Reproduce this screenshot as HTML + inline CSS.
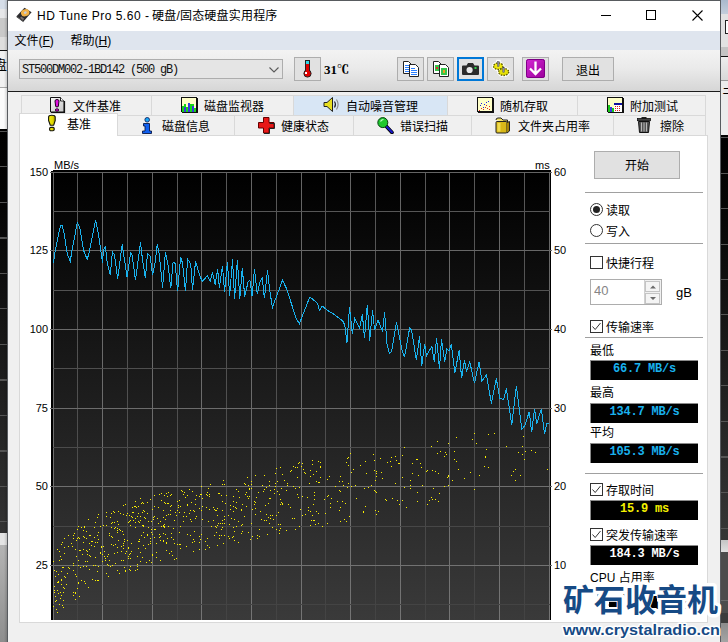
<!DOCTYPE html>
<html lang="zh-CN">
<head>
<meta charset="utf-8">
<title>HD Tune Pro 5.60 - 硬盘/固态硬盘实用程序</title>
<style>
html,body{margin:0;padding:0}
body{width:728px;height:642px;overflow:hidden;position:relative;background:#f0f0f0;
 font-family:"Liberation Sans","Noto Sans CJK SC",sans-serif;font-size:12px;color:#000}
.abs{position:absolute}
.t{position:absolute;white-space:nowrap;line-height:16px;font-size:12px}
.btn{position:absolute;box-sizing:border-box;border:1px solid #adadad;background:#e1e1e1}
.tab{position:absolute;box-sizing:border-box;border:1px solid #d9d9d9;border-bottom:none;background:#f0f0f0;height:21px}

.ax{position:absolute;white-space:nowrap;font:11px/12px "Liberation Sans",sans-serif;color:#000}
.axl{width:30px;text-align:right;left:18px}
.axr{left:554px}
.sep{position:absolute;left:585px;width:118px;height:1px;background:#a0a0a0}
.cb{position:absolute;box-sizing:border-box;width:13px;height:13px;border:1px solid #333;background:#fff;left:590px}
.val{position:absolute;left:590px;width:108px;height:20px;background:#000;text-align:center;
 font:bold 12px/19px "Liberation Mono",monospace;letter-spacing:-0.2px;white-space:nowrap;box-sizing:border-box;border-top:1px solid #8a8a8a;border-left:1px solid #8a8a8a;line-height:16px}
.rd{position:absolute;box-sizing:border-box;width:13px;height:13px;border:1px solid #333;border-radius:50%;background:#fff;left:590px}
</style>
</head>
<body>

<!-- ===== background strips (other windows behind) ===== -->
<div class="abs" style="left:0;top:0;width:8px;height:642px;background:#f0f0f0"></div>
<div class="abs" style="left:0;top:0;width:8px;height:9px;background:#d5dde8"></div>
<div class="abs" style="left:0;top:9px;width:8px;height:9px;background:#e6e7e9"></div>
<div class="abs" style="left:0;top:18px;width:8px;height:19px;background:#c9c9c9"></div>
<div class="abs" style="left:0;top:37px;width:8px;height:13px;background:#dedede"></div>
<div class="abs" style="left:0;top:50px;width:8px;height:1px;background:#111"></div>
<div class="abs" style="left:0;top:51px;width:8px;height:36px;background:#f1f1f1;overflow:hidden"><span class="t" style="left:-6px;top:6px;font-size:13px">盘</span></div>
<div class="abs" style="left:0;top:87px;width:8px;height:1px;background:#a8a8a8"></div>
<div class="abs" style="left:0;top:88px;width:8px;height:41px;background:#fbfbfb"></div>
<div class="abs" style="left:0;top:129px;width:8px;height:404px;background:linear-gradient(#000,#050505 20%,#333)"></div>
<div class="abs" style="left:0;top:131px;width:8px;height:400px;background:repeating-linear-gradient(#555 0,#555 1px,transparent 1px,transparent 35.5px)"></div>
<div class="abs" style="left:0;top:533px;width:8px;height:12px;background:#e4e4e4"></div>
<div class="abs" style="left:0;top:545px;width:8px;height:97px;background:linear-gradient(#b4b4b4,#8e8e8e)"></div>
<div class="abs" style="left:4px;top:0;width:3px;height:642px;background:linear-gradient(90deg,rgba(0,0,0,0),rgba(0,0,0,.16))"></div>

<div class="abs" style="left:721px;top:0;width:7px;height:642px;background:#e2e2e2"></div>
<div class="abs" style="left:721px;top:0;width:7px;height:14px;background:linear-gradient(#a9b9cc,#c3cedb)"></div>
<div class="abs" style="left:721px;top:14px;width:7px;height:33px;background:#e2e2e2"></div>
<div class="abs" style="left:725px;top:20px;width:5px;height:14px;box-sizing:border-box;border:1px solid #222;background:#fff"></div>
<div class="abs" style="left:721px;top:47px;width:7px;height:9px;background:#c4c4c4"></div>
<div class="abs" style="left:721px;top:56px;width:7px;height:1px;background:#111"></div>
<div class="abs" style="left:721px;top:57px;width:7px;height:23px;background:linear-gradient(#eee,#d8d8d8)"></div>
<div class="abs" style="left:721px;top:80px;width:7px;height:1px;background:#999"></div>
<div class="abs" style="left:721px;top:81px;width:7px;height:54px;background:#ececec"></div>
<div class="abs" style="left:722px;top:86px;width:6px;height:10px;overflow:hidden"><span class="t" style="left:0px;top:-4px;font-size:12px">彐</span></div>
<div class="abs" style="left:721px;top:135px;width:7px;height:405px;background:linear-gradient(#000,#060606 20%,#363636)"></div>
<div class="abs" style="left:721px;top:137px;width:7px;height:400px;background:repeating-linear-gradient(#555 0,#555 1px,transparent 1px,transparent 35.5px)"></div>
<div class="abs" style="left:721px;top:540px;width:7px;height:12px;background:linear-gradient(#c4c4c4,#e0e0e0)"></div>
<div class="abs" style="left:721px;top:552px;width:7px;height:71px;background:#4c4c4c"></div>
<div class="abs" style="left:721px;top:600px;width:7px;height:1px;background:#6a6a6a"></div>
<div class="abs" style="left:721px;top:613px;width:7px;height:10px;background:#3c3c3c"></div>
<div class="abs" style="left:721px;top:623px;width:7px;height:19px;background:linear-gradient(#8c8c8c,#a4a4a4)"></div>

<!-- ===== window frame ===== -->
<div class="abs" style="left:7px;top:0;width:714px;height:642px;background:#585b5f"></div>
<div class="abs" style="left:8px;top:1px;width:712px;height:641px;background:#f0f0f0"></div>
<!-- title bar -->
<div class="abs" style="left:8px;top:1px;width:712px;height:30px;background:#fff"></div>
<svg class="abs" style="left:16px;top:7px" width="17" height="16" viewBox="0 0 17 16">
 <polygon points="8.500,0.800 15.600,5.300 7.500,14.600 0.500,9.200" fill="#2b2b2f"/>
 <polygon points="0.500,9.200 7.500,14.600 7.500,15.300 0.500,10" fill="#151515"/>
 <ellipse cx="9.200" cy="5.700" rx="4.300" ry="3.500" fill="#f2b248" transform="rotate(-20 9.200 5.700)"/>
 <ellipse cx="9.300" cy="5.600" rx="1.500" ry="1.300" fill="#c8ccd8" transform="rotate(-20 9.300 5.600)"/>
 <polygon points="5.200,9.600 8.200,11.800 7,13.200 4,11" fill="#7d7370"/>
</svg>
<span class="t" id="title" style="left:37px;top:8px;letter-spacing:0.5px">HD Tune Pro 5.60 -</span><span class="t" id="title2" style="left:152px;top:8px;letter-spacing:0.2px">硬盘/固态硬盘实用程序</span>
<!-- caption buttons -->
<div class="abs" style="left:601px;top:15px;width:10px;height:1px;background:#000"></div>
<div class="abs" style="left:646px;top:10px;width:10px;height:10px;box-sizing:border-box;border:1px solid #000"></div>
<svg class="abs" style="left:692px;top:10px" width="11" height="11" viewBox="0 0 11 11"><path d="M0.5 0.5L10.5 10.5M10.5 0.5L0.5 10.5" stroke="#000" stroke-width="1.1" fill="none"/></svg>

<!-- menu bar -->
<div class="abs" style="left:8px;top:31px;width:712px;height:19px;background:#dfe5ee"></div>
<span class="t" style="left:14.5px;top:33px">文件(<u>F</u>)</span>
<span class="t" style="left:70.500px;top:33px">帮助(<u>H</u>)</span>

<!-- toolbar -->
<div class="abs" style="left:8px;top:50px;width:712px;height:41px;background:linear-gradient(#f3f3f3,#eaeaea 45%,#d6d6d6)"></div>
<div class="abs" style="left:8px;top:91px;width:712px;height:1px;background:#1c1c1c"></div>
<div class="btn" style="left:19px;top:59px;width:264px;height:20px;background:#e5e5e5"></div>
<span class="t" id="drive" style="left:22px;top:62px;color:#111;font:12px/16px 'Liberation Mono',monospace;letter-spacing:-1.2px">ST500DM002-1BD142 (500 gB)</span>
<svg class="abs" style="left:269px;top:67px" width="10" height="6" viewBox="0 0 10 6"><path d="M0.500 0.500L5 5L9.500 0.500" stroke="#5a5a5a" stroke-width="1.100" fill="none"/></svg>

<div class="btn" style="left:294px;top:57px;width:27px;height:24px"></div>
<svg class="abs" style="left:302px;top:60px" width="11" height="18" viewBox="0 0 11 18">
 <rect x="3.5" y="0.5" width="4" height="12" fill="#e00000" stroke="#222" stroke-width="1"/>
 <rect x="4" y="1" width="3" height="3" fill="#30d8e8"/>
 <circle cx="5.5" cy="13.5" r="3.6" fill="#e00000" stroke="#222" stroke-width="1"/>
 <rect x="4" y="9" width="3" height="4" fill="#e00000"/>
 <rect x="3" y="12" width="2" height="2" fill="#fff"/>
</svg>
<span class="t" style="left:324px;top:61px;font:bold 13px/16px 'Liberation Serif','Noto Serif CJK SC',serif">31<span style="font-family:'Noto Serif CJK SC',serif;font-weight:900;font-size:12px">℃</span></span>

<div class="btn" style="left:397px;top:57px;width:27px;height:24px"></div>
<svg class="abs" style="left:403px;top:61px" width="16" height="16" viewBox="0 0 16 16" shape-rendering="crispEdges">
 <path d="M0.500 0.500H5.500L8.500 3.500V12.500H0.500Z" fill="#fff" stroke="#222" shape-rendering="geometricPrecision"/>
 <path d="M2 4.500h4M2 6.500h5M2 8.500h5M2 10.500h5" stroke="#2a7fff" stroke-width="1"/>
 <path d="M6.500 3.500H12.500L15.500 6.500V15.500H6.500Z" fill="#fff" stroke="#222" shape-rendering="geometricPrecision"/>
 <path d="M8 7.500h4M8 9.500h6M8 11.500h6M8 13.500h6" stroke="#2a7fff" stroke-width="1"/>
</svg>
<div class="btn" style="left:427px;top:57px;width:27px;height:24px"></div>
<svg class="abs" style="left:433px;top:61px" width="16" height="16" viewBox="0 0 16 16">
 <path d="M0.5 0.5H5.5L8.5 3.5V12.5H0.5Z" fill="#fff" stroke="#222"/>
 <rect x="2" y="4" width="5" height="6" fill="#35c44a"/><rect x="3" y="6" width="2" height="2" fill="#e83030"/>
 <path d="M6.5 3.5H12.5L15.5 6.5V15.5H6.5Z" fill="#fff" stroke="#222"/>
 <rect x="8" y="7" width="6" height="7" fill="#35c44a"/><rect x="10" y="9" width="2" height="3" fill="#e8a020"/>
</svg>
<div class="btn" style="left:457px;top:57px;width:27px;height:24px;border:2px solid #0078d7"></div>
<svg class="abs" style="left:462px;top:62px" width="17" height="14" viewBox="0 0 17 14">
 <path d="M1 3.5h3.5L6 1h5l1.5 2.5H16a1 1 0 0 1 1 1V12a1 1 0 0 1-1 1H1a1 1 0 0 1-1-1V4.500a1 1 0 0 1 1-1z" fill="#2b2b2b"/>
 <circle cx="7.6" cy="8" r="3.1" fill="#e8e8e8"/>
 <rect x="12.5" y="5" width="2" height="2" fill="#2fd24a"/>
</svg>
<div class="btn" style="left:487px;top:57px;width:27px;height:24px"></div>
<svg class="abs" style="left:491px;top:59px" width="20" height="20" viewBox="0 0 20 20">
 <g stroke="#fff" stroke-width="2.400" fill="#fff"><ellipse cx="7.200" cy="7.200" rx="5" ry="3.600"/><ellipse cx="12.700" cy="13" rx="5.400" ry="3.800"/><rect x="6.400" y="2" width="2" height="5"/></g>
 <ellipse cx="7.200" cy="7.200" rx="4.700" ry="3.300" fill="#e6e000" stroke="#5c5a00" stroke-width="1.300" stroke-dasharray="1.500 1.200"/>
 <ellipse cx="7.200" cy="7" rx="3.300" ry="2.200" fill="#f0ea10"/>
 <ellipse cx="12.700" cy="13" rx="5.100" ry="3.500" fill="#dcd600" stroke="#5c5a00" stroke-width="1.300" stroke-dasharray="1.500 1.200"/>
 <ellipse cx="12.700" cy="12.800" rx="3.600" ry="2.300" fill="#e8e208"/>
 <rect x="6.500" y="2.500" width="1.600" height="5" fill="#8a8aa8" stroke="#444" stroke-width=".4"/>
 <rect x="11.800" y="8.300" width="1.600" height="5" fill="#8a8aa8" stroke="#444" stroke-width=".4"/>
</svg>
<div class="btn" style="left:522px;top:57px;width:27px;height:24px"></div>
<svg class="abs" style="left:526px;top:59px" width="19" height="19" viewBox="0 0 19 19">
 <defs><linearGradient id="pg" x1="0" y1="0" x2="1" y2="1"><stop offset="0" stop-color="#d428d4"/><stop offset="1" stop-color="#9a009a"/></linearGradient></defs>
 <rect x="0" y="0" width="19" height="19" rx="2.500" fill="url(#pg)"/>
 <rect x="0.500" y="0.500" width="18" height="18" rx="2" fill="none" stroke="#7c0084"/>
 <path d="M9.500 2.500V14.500M4 9.500L9.500 15L15 9.500" stroke="#fff" stroke-width="2.300" fill="none"/>
</svg>
<div class="btn" style="left:562px;top:57px;width:52px;height:24px"></div>
<span class="t" style="left:576px;top:63px">退出</span>

<!-- ===== tabs ===== -->
<div class="tab" style="left:21px;top:95px;width:131px"></div>
<div class="tab" style="left:151px;top:95px;width:143px"></div>
<div class="tab" style="left:293px;top:95px;width:155px;background:#d8e6f5"></div>
<div class="tab" style="left:447px;top:95px;width:131px"></div>
<div class="tab" style="left:577px;top:95px;width:129px"></div>

<div class="tab" style="left:117px;top:115px;width:118px"></div>
<div class="tab" style="left:234px;top:115px;width:120px"></div>
<div class="tab" style="left:353px;top:115px;width:119px"></div>
<div class="tab" style="left:471px;top:115px;width:143px"></div>
<div class="tab" style="left:613px;top:115px;width:93px"></div>

<!-- tab pane -->
<div class="abs" style="left:19px;top:135px;width:689px;height:488px;box-sizing:border-box;border:1px solid #d9d9d9;background:#fff"></div>
<!-- selected tab -->
<div class="tab" style="left:19px;top:113px;width:99px;height:23px;background:#fff"></div>

<!-- tab icons + labels : top row -->
<svg class="abs" style="left:50px;top:97px" width="16" height="16" viewBox="0 0 16 16">
 <defs><linearGradient id="dg" x1="0" y1="0" x2="1" y2="1"><stop offset="0" stop-color="#fafafa"/><stop offset="1" stop-color="#c4c4c4"/></linearGradient></defs>
 <path d="M0.500 0.500H10.500L14 4V15H0.500Z" fill="url(#dg)" stroke="#111" stroke-width="1"/>
 <path d="M14.500 4V15.500H1" fill="none" stroke="#111" stroke-width="1.200"/>
 <path d="M10.500 0.500V4H14" fill="#fff" stroke="#111" stroke-width=".9"/>
 <path d="M5 4Q5 2.500 7 2.500Q9 2.500 9 4L8.300 9.500Q7 10.500 5.700 9.500Z" fill="#e010e0" stroke="#200020" stroke-width="1"/>
 <ellipse cx="7" cy="13" rx="1.700" ry="1.200" fill="#e010e0" stroke="#200020" stroke-width=".9"/>
</svg>
<span class="t" style="left:73px;top:99px">文件基准</span>
<svg class="abs" style="left:181px;top:97px" width="17" height="16" viewBox="0 0 17 16" shape-rendering="crispEdges">
 <rect x="0.500" y="0.500" width="15" height="14" fill="#ffffc8" stroke="#111"/>
 <rect x="1" y="15" width="16" height="1" fill="#111"/><rect x="16" y="1" width="1" height="15" fill="#111"/>
 <rect x="1" y="7" width="14" height="8" fill="#18d818"/>
 <rect x="3" y="10" width="2" height="5" fill="#3838e0"/><rect x="7" y="6" width="2" height="9" fill="#3838e0"/><rect x="11" y="9" width="2" height="6" fill="#3838e0"/>
 <rect x="1" y="7" width="2" height="2" fill="#ffffc8"/><rect x="5" y="7" width="2" height="3" fill="#ffffc8"/><rect x="13" y="7" width="2" height="4" fill="#ffffc8"/>
</svg>
<span class="t" style="left:204px;top:99px">磁盘监视器</span>
<svg class="abs" style="left:323px;top:96px" width="17" height="17" viewBox="0 0 17 17">
 <path d="M1 6.500h3L9.500 1.500V15.500L4 10.500H1Z" fill="#e8e020" stroke="#222" stroke-width="1"/>
 <path d="M11.5 5.500q2 3 0 6" fill="none" stroke="#222" stroke-width="1.100"/>
 <path d="M13.500 3.500q3.200 5 0 10" fill="none" stroke="#888" stroke-width="1.100"/>
</svg>
<span class="t" style="left:346px;top:99px">自动噪音管理</span>
<svg class="abs" style="left:477px;top:97px" width="17" height="16" viewBox="0 0 17 16" shape-rendering="crispEdges">
 <rect x="0.500" y="0.500" width="15" height="14" fill="#ffffc8" stroke="#111"/>
 <rect x="1" y="15" width="16" height="1" fill="#111"/><rect x="16" y="1" width="1" height="15" fill="#111"/>
 <path d="M3 8h1M7 7h1M9 5h1M11 4h1M6 10h1M4 6h1" stroke="#2020e8" transform="translate(0,.5)"/>
 <path d="M2 13h1M4 11h1M6 12h1M8 10h1M10 11h1M12 9h1M12 12h1M9 8h1" stroke="#e82020" transform="translate(0,.5)"/>
</svg>
<span class="t" style="left:500px;top:99px">随机存取</span>
<svg class="abs" style="left:607px;top:97px" width="17" height="16" viewBox="0 0 17 16" shape-rendering="crispEdges">
 <rect x="0.500" y="0.500" width="15" height="14" fill="#ffffc8" stroke="#111"/>
 <rect x="1" y="15" width="16" height="1" fill="#111"/><rect x="16" y="1" width="1" height="15" fill="#111"/>
 <rect x="1" y="8" width="2" height="7" fill="#18c818"/><rect x="3" y="10" width="2" height="5" fill="#3838e0"/><rect x="5" y="11" width="2" height="4" fill="#18c818"/>
 <rect x="7" y="6" width="8" height="9" fill="#fff"/><rect x="7" y="6" width="8" height="2" fill="#1010a0"/>
 <path d="M8 9h1M10 9h1M12 9h1M8 11h1M10 11h1M12 11h1M8 13h1M10 13h1M12 13h1" stroke="#e02020" transform="translate(0,.5)"/>
</svg>
<span class="t" style="left:630px;top:99px">附加测试</span>

<!-- bottom row -->
<svg class="abs" style="left:47px;top:114px" width="10" height="18" viewBox="0 0 10 18">
 <defs><linearGradient id="yg" x1="0" y1="0" x2="1" y2="0"><stop offset="0" stop-color="#f4ec10"/><stop offset=".6" stop-color="#e0d800"/><stop offset="1" stop-color="#a8a000"/></linearGradient></defs>
 <path d="M1.600 3Q1.600 1.300 4.800 1.300Q8.200 1.300 8.200 3V6.500L6.700 11.200H3.300L1.600 6.500Z" fill="url(#yg)" stroke="#15150a" stroke-width="1.100" stroke-linejoin="round"/>
 <rect x="2.600" y="13.400" width="4.600" height="3.300" rx="1.200" fill="url(#yg)" stroke="#15150a" stroke-width="1.100"/>
</svg>
<span class="t" style="left:67px;top:117px">基准</span>
<svg class="abs" style="left:141px;top:117px" width="12" height="17" viewBox="0 0 12 17">
 <circle cx="6.200" cy="2.800" r="2.300" fill="#18a8f8" stroke="#102060" stroke-width=".9"/>
 <path d="M2.500 6.500H8.500V14H10.500V16.500H1.500V14H4V9H2.500Z" fill="#1060f0" stroke="#081848" stroke-width=".9"/>
</svg>
<span class="t" style="left:162px;top:119px">磁盘信息</span>
<svg class="abs" style="left:258px;top:117px" width="17" height="17" viewBox="0 0 17 17">
 <path d="M5.500 0.500H11V5.500H16V11H11V16H5.500V11H0.500V5.500H5.500Z" fill="#e81818" stroke="#600" stroke-width="1"/>
 <path d="M11.500 6.500H16.500V11.500H11.500V16.500H6" fill="none" stroke="#222" stroke-width="1"/>
</svg>
<span class="t" style="left:281px;top:119px">健康状态</span>
<svg class="abs" style="left:377px;top:117px" width="17" height="17" viewBox="0 0 17 17">
 <path d="M9 9L15 15.500" stroke="#000" stroke-width="3.600" stroke-linecap="round"/>
 <path d="M9 9L15 15.300" stroke="#1818c8" stroke-width="2" stroke-linecap="round"/>
 <circle cx="5.800" cy="5.600" r="5" fill="#20c830" stroke="#064010" stroke-width="1"/>
 <path d="M3.500 4.500Q4.500 2.500 6.500 2.500" stroke="#c8ffc8" stroke-width="1.200" fill="none"/>
</svg>
<span class="t" style="left:400px;top:119px">错误扫描</span>
<svg class="abs" style="left:495px;top:117px" width="16" height="17" viewBox="0 0 16 17">
 <path d="M1 3Q1 1 3 1H6L8 3H12.500V5" fill="#f0e060" stroke="#222" stroke-width="1"/>
 <rect x="1" y="4.500" width="11" height="11.500" rx="1" fill="#d8b818" stroke="#222" stroke-width="1"/>
 <path d="M12 5.500L14.500 4.500V14L12 16" fill="#a88808" stroke="#222" stroke-width="1"/>
 <rect x="2.500" y="6" width="3" height="8.500" fill="#f0dc50"/>
</svg>
<span class="t" style="left:518px;top:119px">文件夹占用率</span>
<svg class="abs" style="left:637px;top:117px" width="14" height="16" viewBox="0 0 14 16">
 <rect x="4.500" y="0" width="5" height="2" fill="#222"/>
 <rect x="0.500" y="1.500" width="13" height="2.200" fill="#444" stroke="#111" stroke-width=".8"/>
 <path d="M1.500 4.500H12.500L11.500 15.500H2.500Z" fill="#555" stroke="#111" stroke-width="1"/>
 <path d="M4.500 5.500V14.500M7 5.500V14.500M9.500 5.500V14.500" stroke="#b8b8b8" stroke-width="1"/>
</svg>
<span class="t" style="left:660px;top:119px">擦除</span>

<!-- ===== chart ===== -->
<svg class="abs" style="left:0;top:0" width="728" height="642" viewBox="0 0 728 642" shape-rendering="crispEdges">
<defs><linearGradient id="bg" x1="0" y1="0" x2="0" y2="1"><stop offset="0" stop-color="#000"/><stop offset="1" stop-color="#3a3a3a"/></linearGradient><linearGradient id="mj" gradientUnits="userSpaceOnUse" x1="0" y1="172" x2="0" y2="620"><stop offset="0" stop-color="#646464"/><stop offset="1" stop-color="#747474"/></linearGradient><linearGradient id="mn" gradientUnits="userSpaceOnUse" x1="0" y1="172" x2="0" y2="620"><stop offset="0" stop-color="#585858"/><stop offset="0.5" stop-color="#505050"/><stop offset="1" stop-color="#434343"/></linearGradient></defs>
<rect x="51" y="171" width="500" height="449" fill="#000"/>
<rect x="53" y="170" width="498" height="1" fill="#000"/>
<rect x="53" y="172" width="497" height="448" fill="url(#bg)"/>
<rect x="53" y="172" width="1" height="448" fill="url(#mj)"/>
<rect x="77" y="172" width="1" height="448" fill="url(#mn)"/>
<rect x="102" y="172" width="1" height="448" fill="url(#mj)"/>
<rect x="127" y="172" width="1" height="448" fill="url(#mn)"/>
<rect x="152" y="172" width="1" height="448" fill="url(#mj)"/>
<rect x="177" y="172" width="1" height="448" fill="url(#mn)"/>
<rect x="201" y="172" width="1" height="448" fill="url(#mj)"/>
<rect x="226" y="172" width="1" height="448" fill="url(#mn)"/>
<rect x="251" y="172" width="1" height="448" fill="url(#mj)"/>
<rect x="276" y="172" width="1" height="448" fill="url(#mn)"/>
<rect x="301" y="172" width="1" height="448" fill="url(#mj)"/>
<rect x="325" y="172" width="1" height="448" fill="url(#mn)"/>
<rect x="350" y="172" width="1" height="448" fill="url(#mj)"/>
<rect x="375" y="172" width="1" height="448" fill="url(#mn)"/>
<rect x="400" y="172" width="1" height="448" fill="url(#mj)"/>
<rect x="425" y="172" width="1" height="448" fill="url(#mn)"/>
<rect x="449" y="172" width="1" height="448" fill="url(#mj)"/>
<rect x="474" y="172" width="1" height="448" fill="url(#mn)"/>
<rect x="499" y="172" width="1" height="448" fill="url(#mj)"/>
<rect x="524" y="172" width="1" height="448" fill="url(#mn)"/>
<rect x="549" y="172" width="1" height="448" fill="url(#mj)"/>
<rect x="53" y="172" width="497" height="1" fill="#646464"/>
<rect x="50" y="172" width="3" height="1" fill="#6e6e6e"/>
<rect x="550" y="172" width="2" height="1" fill="#6e6e6e"/>
<rect x="53" y="211" width="497" height="1" fill="#565656"/>
<rect x="53" y="250" width="497" height="1" fill="#676767"/>
<rect x="50" y="250" width="3" height="1" fill="#6e6e6e"/>
<rect x="550" y="250" width="2" height="1" fill="#6e6e6e"/>
<rect x="53" y="290" width="497" height="1" fill="#525252"/>
<rect x="53" y="329" width="497" height="1" fill="#6a6a6a"/>
<rect x="50" y="329" width="3" height="1" fill="#6e6e6e"/>
<rect x="550" y="329" width="2" height="1" fill="#6e6e6e"/>
<rect x="53" y="368" width="497" height="1" fill="#4f4f4f"/>
<rect x="53" y="408" width="497" height="1" fill="#6c6c6c"/>
<rect x="50" y="408" width="3" height="1" fill="#6e6e6e"/>
<rect x="550" y="408" width="2" height="1" fill="#6e6e6e"/>
<rect x="53" y="447" width="497" height="1" fill="#4b4b4b"/>
<rect x="53" y="486" width="497" height="1" fill="#6f6f6f"/>
<rect x="50" y="486" width="3" height="1" fill="#6e6e6e"/>
<rect x="550" y="486" width="2" height="1" fill="#6e6e6e"/>
<rect x="53" y="526" width="497" height="1" fill="#474747"/>
<rect x="53" y="565" width="497" height="1" fill="#727272"/>
<rect x="50" y="565" width="3" height="1" fill="#6e6e6e"/>
<rect x="550" y="565" width="2" height="1" fill="#6e6e6e"/>
<rect x="53" y="604" width="497" height="1" fill="#444444"/>
<path d="M75 593h1M78 537h1M84 527h1M57 590h1M100 553h1M53 561h1M58 574h1M78 560h1M75 599h1M94 537h1M62 567h1M72 546h1M98 580h1M56 600h1M57 612h1M58 581h1M61 571h1M89 543h1M63 607h1M68 546h1M95 522h1M63 592h1M54 592h1M82 554h1M77 588h1M60 598h1M62 605h1M100 553h1M64 553h1M65 577h1M61 544h1M80 567h1M98 514h1M55 576h1M59 604h1M85 561h1M63 587h1M54 586h1M68 535h1M89 569h1M92 541h1M97 542h1M95 557h1M81 527h1M102 561h1M89 549h1M57 549h1M76 576h1M83 542h1M86 531h1M85 583h1M86 550h1M98 539h1M68 567h1M95 580h1M61 559h1M73 563h1M94 527h1M61 580h1M54 590h1M64 538h1M75 574h1M100 526h1M58 593h1M66 584h1M83 549h1M64 588h1M75 592h1M81 580h1M76 540h1M93 565h1M97 580h1M92 579h1M58 582h1M62 542h1M61 595h1M60 592h1M87 554h1M57 582h1M89 555h1M80 550h1M97 571h1M79 538h1M78 526h1M78 582h1M77 529h1M73 595h1M76 556h1M97 535h1M83 530h1M54 570h1M69 568h1M59 560h1M79 550h1M79 538h1M84 581h1M95 565h1M97 535h1M63 600h1M64 576h1M73 535h1M55 596h1M101 546h1M77 538h1M54 586h1M60 556h1M102 554h1M75 549h1M78 560h1M94 546h1M73 538h1M53 606h1M95 542h1M78 583h1M98 566h1M73 592h1M91 545h1M56 571h1M84 537h1M86 566h1M79 596h1M87 551h1M89 535h1M56 609h1M78 565h1M84 526h1M64 547h1M61 584h1M73 570h1M67 573h1M88 519h1M55 601h1M97 517h1M63 567h1M101 547h1M88 587h1M83 566h1M59 551h1M86 538h1M73 565h1M100 552h1M91 541h1M87 561h1M90 535h1M98 532h1M74 533h1M61 579h1M71 543h1M90 556h1M83 536h1M115 563h1M135 570h1M129 554h1M123 545h1M106 516h1M126 551h1M141 503h1M135 506h1M138 548h1M109 533h1M120 513h1M130 566h1M148 527h1M117 528h1M149 560h1M120 530h1M122 531h1M130 558h1M144 537h1M140 561h1M103 546h1M130 570h1M142 502h1M141 535h1M147 502h1M109 560h1M114 522h1M128 556h1M119 573h1M127 540h1M137 564h1M143 545h1M142 557h1M150 541h1M137 556h1M123 514h1M151 521h1M112 537h1M150 499h1M108 554h1M111 513h1M131 516h1M111 523h1M138 541h1M111 527h1M140 520h1M143 532h1M146 562h1M129 569h1M113 511h1M142 525h1M128 522h1M135 527h1M121 560h1M132 512h1M118 524h1M128 547h1M115 544h1M140 498h1M144 517h1M138 506h1M125 570h1M145 518h1M123 543h1M113 545h1M110 566h1M118 511h1M125 553h1M136 507h1M125 571h1M135 501h1M137 516h1M125 504h1M142 512h1M117 532h1M117 530h1M135 518h1M139 522h1M130 553h1M143 503h1M107 556h1M111 536h1M132 507h1M110 517h1M106 573h1M128 548h1M143 525h1M123 505h1M137 569h1M135 522h1M119 529h1M128 558h1M133 512h1M147 535h1M127 513h1M151 532h1M144 511h1M133 520h1M131 551h1M148 521h1M108 576h1M147 535h1M130 520h1M152 554h1M108 565h1M147 513h1M143 510h1M106 512h1M151 562h1M117 552h1M121 546h1M103 525h1M109 535h1M111 544h1M130 525h1M104 556h1M150 538h1M123 548h1M140 552h1M152 555h1M123 534h1M147 534h1M124 567h1M105 560h1M139 541h1M117 521h1M124 539h1M105 558h1M114 528h1M114 512h1M150 543h1M123 560h1M139 539h1M107 564h1M129 521h1M117 547h1M143 526h1M131 543h1M118 540h1M151 529h1M117 570h1M112 565h1M126 515h1M152 509h1M112 522h1M138 521h1M145 548h1M137 566h1M106 525h1M138 513h1M114 553h1M121 551h1M132 517h1M148 544h1M134 506h1M124 541h1M104 551h1M115 527h1M140 516h1M129 515h1M201 486h1M189 513h1M177 501h1M184 512h1M191 521h1M194 531h1M199 496h1M160 536h1M174 543h1M191 502h1M163 533h1M154 537h1M180 548h1M159 494h1M174 520h1M192 491h1M180 526h1M164 502h1M154 516h1M178 507h1M156 552h1M165 503h1M193 510h1M170 506h1M154 529h1M201 494h1M189 489h1M196 495h1M167 503h1M201 534h1M163 510h1M164 524h1M170 514h1M182 491h1M184 492h1M186 546h1M196 516h1M194 511h1M163 517h1M179 500h1M163 525h1M174 559h1M195 499h1M156 543h1M166 493h1M165 519h1M187 505h1M160 560h1M190 535h1M153 517h1M156 557h1M190 510h1M164 495h1M181 490h1M173 528h1M187 505h1M185 497h1M166 542h1M171 551h1M166 515h1M154 495h1M180 544h1M167 538h1M163 541h1M199 542h1M183 494h1M171 494h1M168 526h1M160 521h1M160 540h1M157 518h1M159 534h1M179 512h1M170 495h1M155 529h1M175 512h1M153 519h1M180 506h1M161 526h1M199 508h1M199 536h1M183 516h1M166 550h1M171 505h1M177 510h1M200 494h1M163 540h1M152 534h1M164 527h1M179 532h1M193 551h1M169 553h1M187 534h1M200 539h1M183 521h1M170 510h1M178 505h1M168 503h1M158 507h1M187 495h1M190 519h1M195 504h1M177 544h1M187 504h1M168 514h1M194 541h1M173 539h1M193 539h1M171 537h1M161 493h1M199 549h1M186 516h1M172 555h1M154 506h1M166 543h1M158 523h1M176 515h1M192 542h1M171 533h1M201 510h1M179 544h1M161 500h1M164 526h1M168 492h1M159 537h1M163 526h1M165 534h1M167 496h1M176 558h1M195 518h1M242 504h1M234 519h1M248 532h1M224 535h1M210 484h1M208 488h1M239 497h1M202 498h1M202 519h1M241 525h1M242 531h1M251 481h1M222 527h1M247 477h1M213 507h1M234 531h1M233 501h1M247 496h1M238 491h1M229 524h1M207 492h1M223 480h1M222 501h1M249 488h1M218 523h1M223 543h1M222 527h1M215 526h1M218 493h1M251 484h1M220 523h1M232 537h1M233 511h1M207 538h1M224 523h1M221 495h1M230 509h1M224 519h1M248 485h1M251 523h1M238 542h1M245 484h1M226 495h1M234 540h1M241 510h1M205 541h1M214 535h1M228 536h1M215 510h1M241 509h1M241 533h1M229 538h1M209 494h1M219 538h1M207 495h1M244 516h1M205 549h1M233 536h1M211 526h1M202 506h1M233 496h1M236 489h1M236 508h1M207 545h1M219 493h1M236 526h1M217 508h1M233 506h1M222 510h1M248 498h1M213 520h1M245 494h1M235 507h1M221 529h1M224 484h1M216 510h1M216 527h1M214 509h1M246 492h1M219 535h1M231 518h1M206 507h1M238 521h1M246 506h1M225 503h1M217 525h1M250 539h1M221 535h1M236 502h1M222 523h1M251 488h1M209 509h1M206 494h1M233 527h1M242 524h1M208 521h1M249 496h1M228 515h1M217 515h1M230 505h1M216 532h1M222 484h1M224 516h1M244 483h1M209 547h1M222 520h1M249 489h1M242 524h1M209 496h1M217 545h1M293 466h1M255 514h1M268 503h1M295 529h1M276 529h1M266 520h1M270 498h1M269 498h1M254 501h1M279 494h1M256 497h1M275 483h1M276 468h1M299 462h1M299 487h1M270 490h1M281 488h1M277 481h1M264 489h1M272 527h1M266 514h1M293 486h1M292 518h1M254 504h1M279 530h1M252 536h1M280 467h1M272 515h1M297 467h1M273 519h1M274 489h1M288 504h1M284 480h1M267 534h1M297 477h1M278 524h1M295 488h1M270 515h1M276 515h1M290 471h1M260 511h1M269 481h1M281 502h1M280 524h1M280 499h1M268 517h1M264 520h1M264 475h1M270 518h1M282 504h1M297 494h1M263 491h1M293 466h1M280 504h1M259 536h1M291 470h1M262 485h1M282 474h1M280 528h1M286 490h1M287 485h1M287 483h1M252 509h1M266 487h1M275 486h1M265 505h1M259 529h1M282 503h1M278 512h1M290 507h1M269 523h1M274 493h1M298 497h1M269 485h1M257 535h1M255 502h1M257 538h1M295 467h1M255 475h1M300 509h1M294 518h1M255 508h1M277 491h1M261 519h1M275 473h1M279 533h1M258 492h1M286 530h1M299 526h1M298 463h1M330 503h1M331 498h1M347 458h1M327 523h1M303 469h1M344 519h1M302 463h1M342 501h1M327 496h1M339 510h1M301 466h1M340 521h1M342 481h1M318 482h1M302 515h1M314 499h1M327 479h1M335 486h1M313 520h1M310 470h1M314 492h1M340 476h1M313 504h1M314 495h1M314 520h1M310 476h1M316 481h1M337 501h1M340 491h1M305 514h1M313 474h1M322 526h1M319 482h1M346 521h1M320 467h1M340 507h1M318 513h1M320 477h1M330 507h1M325 513h1M302 496h1M320 462h1M346 462h1M311 520h1M349 516h1M318 523h1M308 510h1M348 465h1M308 507h1M345 503h1M348 483h1M320 466h1M315 524h1M305 473h1M318 461h1M316 471h1M307 497h1M328 495h1M339 490h1M348 457h1M312 464h1M316 511h1M347 487h1M309 483h1M329 476h1M340 521h1M324 499h1M343 485h1M310 525h1M350 453h1M339 481h1M304 472h1M310 511h1M312 460h1M312 515h1M376 492h1M374 460h1M351 472h1M353 469h1M381 472h1M374 490h1M366 473h1M395 483h1M371 485h1M374 470h1M396 460h1M397 500h1M395 456h1M376 514h1M365 461h1M387 462h1M380 458h1M398 463h1M356 498h1M368 487h1M375 510h1M376 473h1M351 486h1M364 488h1M382 478h1M355 485h1M375 491h1M399 463h1M373 454h1M390 461h1M392 498h1M363 511h1M376 476h1M378 511h1M375 480h1M365 506h1M376 471h1M360 465h1M392 498h1M399 504h1M385 499h1M386 500h1M391 457h1M391 466h1M363 512h1M402 477h1M417 492h1M431 497h1M447 477h1M404 487h1M406 507h1M444 456h1M410 488h1M438 501h1M431 446h1M437 441h1M444 486h1M439 493h1M429 500h1M432 470h1M420 463h1M402 455h1M440 451h1M433 488h1M435 471h1M416 459h1M410 485h1M435 499h1M417 501h1M446 454h1M448 475h1M448 485h1M417 459h1M426 471h1M402 500h1M427 470h1M437 453h1M410 480h1M412 463h1M404 447h1M418 475h1M448 476h1M421 467h1M412 473h1M448 443h1M422 485h1M438 473h1M432 499h1M445 452h1M427 504h1M476 443h1M488 434h1M458 469h1M464 478h1M486 449h1M488 467h1M485 457h1M472 439h1M474 489h1M494 433h1M454 451h1M485 456h1M456 461h1M479 475h1M470 472h1M484 466h1M452 480h1M456 437h1M474 433h1M454 459h1M523 436h1M547 469h1M524 459h1M515 480h1M506 446h1M511 475h1M525 451h1M520 475h1M513 471h1M535 452h1M518 452h1M522 446h1M531 450h1M515 469h1M522 454h1" stroke="#fbf000" stroke-width="1" fill="none" transform="translate(0,0.5)"/>
<polyline points="53.5,263.3 55.3,250.0 60.5,225.4 62.3,225.7 64.0,233.0 67.5,254.9 70.3,261.2 71.7,252.0 77.3,222.6 79.7,227.5 83.7,250.7 87.2,259.4 89.3,252.0 95.6,220.5 98.4,233.8 102.6,263.3 103.3,250.7 105.4,245.8 106.8,260.5 110.3,275.2 112.4,252.0 114.5,254.9 117.7,278.7 122.2,244.4 127.1,277.3 130.6,252.8 132.0,254.9 135.5,280.1 140.5,242.5 142.6,260.5 145.4,278.0 147.5,253.5 150.0,255.6 152.5,274.9 154.9,263.7 157.3,244.0 159.1,253.1 162.6,287.5 165.4,252.4 168.0,265.0 170.8,288.2 173.1,262.0 175.2,263.7 177.6,291.4 180.6,257.3 182.5,263.0 185.5,291.4 187.6,259.2 190.7,263.7 192.5,289.6 195.6,261.1 198.4,271.4 202.2,281.6 207.5,275.6 210.3,281.2 212.4,272.1 215.2,284.7 217.6,269.3 219.4,287.5 222.5,266.2 224.6,291.7 227.4,262.0 229.7,295.6 232.5,259.2 234.6,298.7 237.4,260.2 239.8,298.7 242.3,267.9 244.7,296.6 248.2,281.2 250.0,280.5 252.1,296.3 254.5,268.9 257.3,294.2 259.8,282.3 262.3,278.0 264.4,298.4 267.5,270.3 269.6,289.3 272.4,307.5 282.5,280.2 286.5,288.6 296.3,318.7 299.4,323.6 309.6,297.4 311.7,298.4 317.6,303.3 319.4,310.3 322.2,306.1 328.5,311.0 334.2,314.5 342.6,320.8 344.7,325.0 347.0,342.6 349.5,306.8 352.3,333.5 354.7,318.8 359.6,327.9 362.4,314.5 364.5,338.4 367.3,304.7 369.7,340.5 372.5,310.3 374.6,330.0 378.1,320.2 382.5,331.4 384.6,312.2 387.0,344.0 389.4,353.1 391.6,351.7 396.5,322.5 401.7,348.9 404.5,357.3 409.7,327.6 411.5,330.0 416.4,360.1 419.5,336.3 421.8,365.7 424.6,344.0 426.5,355.9 431.9,346.1 434.2,361.6 436.6,338.4 439.5,368.6 441.5,339.1 444.7,361.6 446.8,348.9 448.9,351.0 451.3,344.0 454.8,372.8 459.2,350.3 461.6,378.4 464.4,360.2 466.5,371.4 469.7,361.6 474.5,383.3 479.1,361.6 481.9,381.2 486.5,374.9 491.4,403.6 496.3,378.4 499.8,398.7 503.7,399.3 506.3,388.5 511.8,424.8 516.4,385.6 521.8,429.2 524.9,425.4 529.2,411.7 531.7,432.3 534.5,408.6 536.7,424.2 541.3,408.6 544.5,434.1 546.9,423.5 548.8,423.3" fill="none" stroke="#19b2ee" stroke-width="1"/>
</svg>
<span class="ax" style="left:54px;top:159px">MB/s</span>
<span class="ax" style="left:535px;top:159px">ms</span>
<span class="ax axl" style="top:166px">150</span>
<span class="ax axl" style="top:244px">125</span>
<span class="ax axl" style="top:323px">100</span>
<span class="ax axl" style="top:402px">75</span>
<span class="ax axl" style="top:480px">50</span>
<span class="ax axl" style="top:559px">25</span>
<span class="ax axr" style="top:166px">60</span>
<span class="ax axr" style="top:244px">50</span>
<span class="ax axr" style="top:323px">40</span>
<span class="ax axr" style="top:402px">30</span>
<span class="ax axr" style="top:480px">20</span>
<span class="ax axr" style="top:559px">10</span>

<!-- ===== right panel ===== -->
<div class="btn" style="left:594px;top:151px;width:86px;height:28px"></div>
<span class="t" style="left:625px;top:158px">开始</span>
<div class="sep" style="top:192px"></div>
<div class="rd" style="top:203px"><div class="abs" style="left:2px;top:2px;width:7px;height:7px;border-radius:50%;background:#222"></div></div>
<span class="t" style="left:606px;top:203px">读取</span>
<div class="rd" style="top:224px"></div>
<span class="t" style="left:606px;top:224px">写入</span>
<div class="sep" style="top:243px"></div>
<div class="cb" style="top:256px"></div>
<span class="t" style="left:606px;top:256px">快捷行程</span>
<div class="abs" style="left:590px;top:279px;width:72px;height:26px;box-sizing:border-box;border:1px solid #adadad;background:#fff"></div>
<span class="t" style="left:594px;top:283px;font-size:13px;color:#858585">40</span>
<div class="abs" style="left:644px;top:280px;width:16px;height:24px;background:#f0f0f0;border-left:1px solid #d0d0d0"></div>
<div class="abs" style="left:645px;top:281px;width:15px;height:11px;box-sizing:border-box;border:1px solid #c4c4c4;background:#f4f4f4"></div>
<div class="abs" style="left:645px;top:293px;width:15px;height:11px;box-sizing:border-box;border:1px solid #c4c4c4;background:#f4f4f4"></div>
<svg class="abs" style="left:650px;top:285px" width="6" height="16" viewBox="0 0 6 16"><path d="M0 3.500L3 0.500L6 3.500Z M0 12L3 15L6 12Z" fill="#6a6a6a"/></svg>
<span class="t" style="left:676px;top:285px;font-size:13px">gB</span>
<div class="cb" style="top:320px"><svg class="abs" style="left:0;top:0" width="11" height="11" viewBox="0 0 11 11"><path d="M1.500 5.500L4.200 8.500L9.500 2" stroke="#333" stroke-width="1" fill="none"/></svg></div>
<span class="t" style="left:606px;top:320px">传输速率</span>
<div class="sep" style="top:337px"></div>
<span class="t" style="left:590px;top:343px">最低</span>
<div class="val" style="top:360px;color:#19b2ee">66.7 MB/s</div>
<span class="t" style="left:590px;top:385px">最高</span>
<div class="val" style="top:403px;color:#19b2ee">134.7 MB/s</div>
<span class="t" style="left:590px;top:425px">平均</span>
<div class="val" style="top:443px;color:#19b2ee">105.3 MB/s</div>
<div class="sep" style="top:473px"></div>
<div class="cb" style="top:483px"><svg class="abs" style="left:0;top:0" width="11" height="11" viewBox="0 0 11 11"><path d="M1.500 5.500L4.200 8.500L9.500 2" stroke="#333" stroke-width="1" fill="none"/></svg></div>
<span class="t" style="left:606px;top:483px">存取时间</span>
<div class="val" style="top:500px;color:#f4f000">15.9 ms</div>
<div class="cb" style="top:528px"><svg class="abs" style="left:0;top:0" width="11" height="11" viewBox="0 0 11 11"><path d="M1.500 5.500L4.200 8.500L9.500 2" stroke="#333" stroke-width="1" fill="none"/></svg></div>
<span class="t" style="left:606px;top:528px">突发传输速率</span>
<div class="val" style="top:545px;color:#fff">184.3 MB/s</div>
<span class="t" style="left:590px;top:570px">CPU 占用率</span>
<div class="val" style="top:588px;height:21px;left:597px;width:93px"></div>

<!-- ===== watermark ===== -->
<svg class="abs" style="left:556px;top:578px" width="172" height="64" viewBox="0 0 172 64">
 <g font-family="'Noto Sans CJK SC','WenQuanYi Zen Hei',sans-serif" font-weight="700" font-size="31">
  <text x="7" y="33" textLength="155" lengthAdjust="spacingAndGlyphs" fill="#fff" stroke="#fff" stroke-width="7" stroke-linejoin="round">矿石收音机</text>
  <rect x="53" y="19" width="10" height="10" fill="#000"/>
  <path d="M93 18L101 18L101 30L95 30L92 24Z" fill="#000"/>
  <text x="7" y="33" textLength="155" lengthAdjust="spacingAndGlyphs" fill="#164a85" stroke="#fff" stroke-width="1.600" stroke-linejoin="round" paint-order="stroke">矿石收音机</text>
 </g>
 <text x="7" y="57" font-family="'Liberation Sans',sans-serif" font-weight="bold" font-size="15.500" textLength="157" lengthAdjust="spacingAndGlyphs" fill="#164a85" stroke="#fff" stroke-width="3" stroke-linejoin="round" paint-order="stroke">www.crystalradio.cn</text>
</svg>

</body>
</html>
